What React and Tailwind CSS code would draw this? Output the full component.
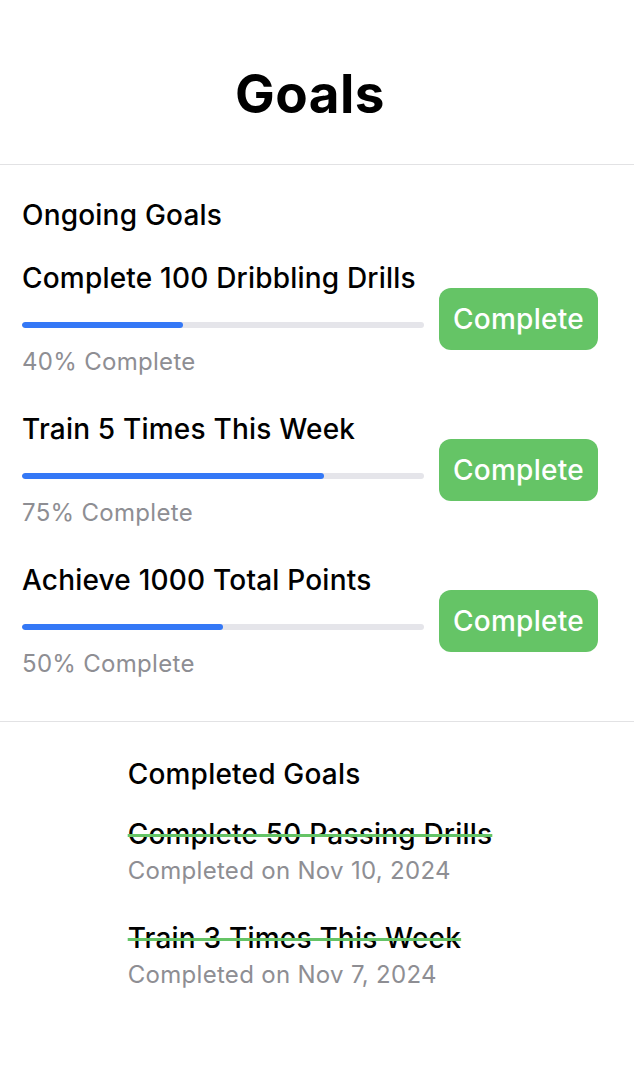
import React from 'react'

const ongoing = [
  { title: 'Complete 100 Dribbling Drills', progress: 40 },
  { title: 'Train 5 Times This Week', progress: 75 },
  { title: 'Achieve 1000 Total Points', progress: 50 },
]

const completed = [
  { title: 'Complete 50 Passing Drills', date: 'Nov 10, 2024' },
  { title: 'Train 3 Times This Week', date: 'Nov 7, 2024' },
]

function GoalRow({ title, progress }) {
  return (
    <div className="flex items-center gap-[15px]">
      <div className="w-[402px]">
        <div className="text-[28px] leading-[28px] font-medium tracking-[0.2px] text-black whitespace-nowrap">{title}</div>
        <div className="mt-[30px] h-[6px] rounded-full bg-[#e5e5ea] overflow-hidden">
          <div className="h-full rounded-full bg-[#3478f6]" style={{ width: `${progress}%` }} />
        </div>
        <div className="mt-[22px] text-[24px] leading-[24px] tracking-[0.3px] text-[#8e8e93]">{progress}% Complete</div>
      </div>
      <button className="w-[159px] h-[62px] rounded-[12px] bg-[#65c466] text-white text-[28px] font-medium tracking-[0.3px]">
        Complete
      </button>
    </div>
  )
}

export default function App() {
  return (
    <div className="min-h-screen bg-white text-black font-['Inter','Noto_Sans',sans-serif]">
      <header className="border-b border-[#e2e2e4]">
        <h1 className="w-[620px] pt-[68px] pb-[43px] text-center text-[53px] leading-[53px] font-bold tracking-[0.5px]">Goals</h1>
      </header>

      <section className="border-b border-[#e2e2e4]">
        <div className="w-[620px] px-[22px] pt-[36px] pb-[45px]">
          <h2 className="text-[28px] leading-[28px] font-medium tracking-[0.2px]">Ongoing Goals</h2>
          <div className="mt-[35px] flex flex-col gap-[41px]">
            {ongoing.map(g => (
              <GoalRow key={g.title} {...g} />
            ))}
          </div>
        </div>
      </section>

      <section className="w-[620px] flex justify-center pt-[38px]">
        <div>
          <h2 className="text-[28px] leading-[28px] font-medium tracking-[0.2px]">Completed Goals</h2>
          <div className="mt-[32px] flex flex-col gap-[41px]">
            {completed.map(g => (
              <div key={g.title}>
                <div className="text-[28px] leading-[28px] font-medium tracking-[0.2px] line-through decoration-[#65c466] decoration-[3px]">{g.title}</div>
                <div className="mt-[11px] text-[24px] leading-[24px] tracking-[0.3px] text-[#8e8e93]">Completed on {g.date}</div>
              </div>
            ))}
          </div>
        </div>
      </section>
    </div>
  )
}
